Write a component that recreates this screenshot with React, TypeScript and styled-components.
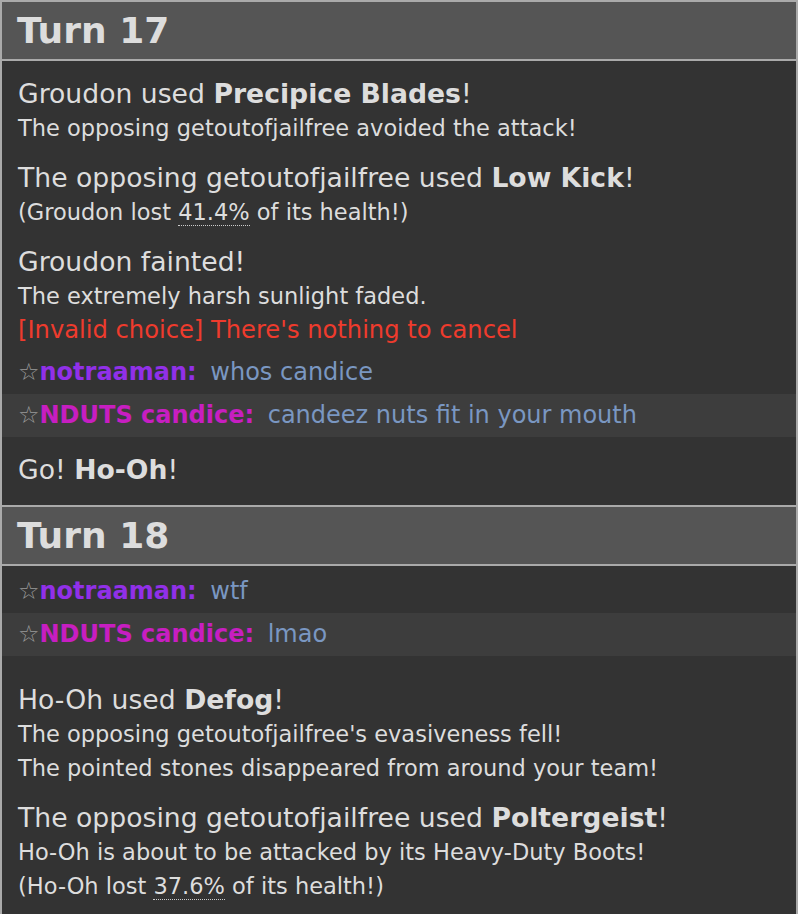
import React from "react";
import styled, { createGlobalStyle } from "styled-components";

const Global = createGlobalStyle`
  html, body { margin: 0; padding: 0; background: #333; }
  body { font-family: Verdana, "DejaVu Sans", sans-serif; }
`;

const Log = styled.div`
  width: 798px;
  box-sizing: border-box;
  border-left: 2px solid #aaa;
  border-right: 2px solid #aaa;
  border-bottom: 2px solid #aaa;
  background: #333;
  color: #ddd;
  font-family: Verdana, "DejaVu Sans", sans-serif;
`;

const TurnHeader = styled.h2`
  margin: 0;
  padding: 8px 15px;
  border-top: 2px solid #aaa;
  border-bottom: 2px solid #aaa;
  background: #555;
  color: #ddd;
  font-size: 36px;
  line-height: 41px;
  font-weight: bold;
`;

const TurnBody = styled.div<{ $padBottom?: number }>`
  display: flex;
  flex-direction: column;
  padding-bottom: ${(p) => p.$padBottom ?? 17}px;
`;

const Block = styled.div<{ $gap?: number }>`
  margin-top: ${(p) => p.$gap ?? 16}px;
  padding: 0 16px;
`;

const MainLine = styled.div`
  font-size: 26.67px;
  line-height: 34px;
  white-space: nowrap;
`;

const SmallLine = styled.div`
  font-size: 22.5px;
  line-height: 34px;
  white-space: nowrap;
`;

const ErrorLine = styled.div`
  font-size: 24.2px;
  line-height: 34px;
  color: #ee3b2d;
  white-space: nowrap;
`;

const Strong = styled.strong`
  font-weight: bold;
`;

const Percent = styled.abbr`
  text-decoration: none;
  border-bottom: 1.5px dotted #ccc;
`;

const ChatGroup = styled.div`
  margin-top: 4px;
  display: flex;
  flex-direction: column;
`;

const ChatRow = styled.div<{ $alt?: boolean }>`
  padding: 7px 16px;
  font-size: 24px;
  line-height: 29px;
  white-space: nowrap;
  background: ${(p) => (p.$alt ? "#3d3d3d" : "transparent")};
`;

const Star = styled.span`
  color: #999;
  font-weight: normal;
`;

const UserName = styled.strong<{ $color: string }>`
  font-weight: bold;
  color: ${(p) => p.$color};
`;

const ChatText = styled.em`
  font-style: normal;
  color: #7a97c2;
  padding-left: 6px;
`;

type Chat = { user: string; color: string; text: string };

const Chats: React.FC<{ items: Chat[] }> = ({ items }) => (
  <ChatGroup>
    {items.map((c, i) => (
      <ChatRow key={i} $alt={i % 2 === 1}>
        <UserName $color={c.color}>
          <Star>☆</Star>
          {c.user}:
        </UserName>{" "}
        <ChatText>{c.text}</ChatText>
      </ChatRow>
    ))}
  </ChatGroup>
);

const PURPLE = "#9130e8";
const MAGENTA = "#c71ec1";

export default function App() {
  return (
    <>
      <Global />
      <Log>
        <TurnHeader>Turn 17</TurnHeader>
        <TurnBody $padBottom={18}>
          <Block>
            <MainLine>
              Groudon used <Strong>Precipice Blades</Strong>!
            </MainLine>
            <SmallLine>The opposing getoutofjailfree avoided the attack!</SmallLine>
          </Block>
          <Block>
            <MainLine>
              The opposing getoutofjailfree used <Strong>Low Kick</Strong>!
            </MainLine>
            <SmallLine>
              (Groudon lost <Percent>41.4%</Percent> of its health!)
            </SmallLine>
          </Block>
          <Block>
            <MainLine>Groudon fainted!</MainLine>
            <SmallLine>The extremely harsh sunlight faded.</SmallLine>
            <ErrorLine>[Invalid choice] There's nothing to cancel</ErrorLine>
          </Block>
          <Chats
            items={[
              { user: "notraaman", color: PURPLE, text: "whos candice" },
              { user: "NDUTS candice", color: MAGENTA, text: "candeez nuts fit in your mouth" },
            ]}
          />
          <Block>
            <MainLine>
              Go! <Strong>Ho-Oh</Strong>!
            </MainLine>
          </Block>
        </TurnBody>
        <TurnHeader>Turn 18</TurnHeader>
        <TurnBody $padBottom={14}>
          <Chats
            items={[
              { user: "notraaman", color: PURPLE, text: "wtf" },
              { user: "NDUTS candice", color: MAGENTA, text: "lmao" },
            ]}
          />
          <Block $gap={27}>
            <MainLine>
              Ho-Oh used <Strong>Defog</Strong>!
            </MainLine>
            <SmallLine>The opposing getoutofjailfree's evasiveness fell!</SmallLine>
            <SmallLine>The pointed stones disappeared from around your team!</SmallLine>
          </Block>
          <Block>
            <MainLine>
              The opposing getoutofjailfree used <Strong>Poltergeist</Strong>!
            </MainLine>
            <SmallLine>Ho-Oh is about to be attacked by its Heavy-Duty Boots!</SmallLine>
            <SmallLine>
              (Ho-Oh lost <Percent>37.6%</Percent> of its health!)
            </SmallLine>
          </Block>
        </TurnBody>
      </Log>
    </>
  );
}
